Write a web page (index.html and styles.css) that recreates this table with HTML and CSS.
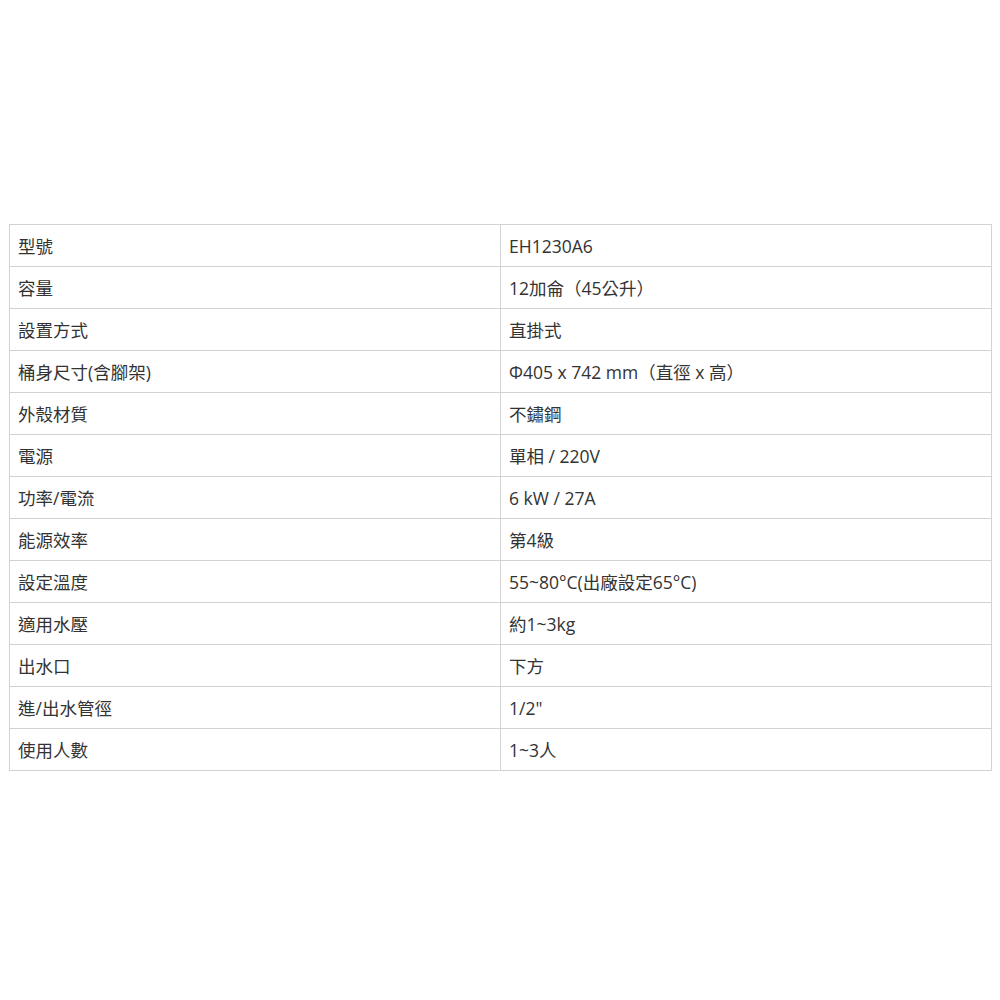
FILE: index.html
```html
<!DOCTYPE html>
<html lang="zh-Hant">
<head>
<meta charset="utf-8">
<link rel="stylesheet" href="styles.css">
</head>
<body>
<table class="spec">
<tbody>
<tr><td>型號</td><td>EH1230A6</td></tr>
<tr><td>容量</td><td>12加侖（45公升）</td></tr>
<tr><td>設置方式</td><td>直掛式</td></tr>
<tr><td>桶身尺寸(含腳架)</td><td>Φ405 x 742 mm（直徑 x 高）</td></tr>
<tr><td>外殼材質</td><td>不鏽鋼</td></tr>
<tr><td>電源</td><td>單相 / 220V</td></tr>
<tr><td>功率/電流</td><td>6 kW / 27A</td></tr>
<tr><td>能源效率</td><td>第4級</td></tr>
<tr><td>設定溫度</td><td>55~80°C(出廠設定65°C)</td></tr>
<tr><td>適用水壓</td><td>約1~3kg</td></tr>
<tr><td>出水口</td><td>下方</td></tr>
<tr><td>進/出水管徑</td><td>1/2"</td></tr>
<tr><td>使用人數</td><td>1~3人</td></tr>
</tbody>
</table>
</body>
</html>
```
FILE: styles.css
```css
html, body {
  margin: 0;
  background: #ffffff;
}
body {
  padding: 224px 8px 0 9px;
  font-family: "Open Sans", "Noto Sans CJK TC", sans-serif;
  font-size: 17.5px;
  color: #333333;
}
.spec {
  width: 983px;
  border-collapse: collapse;
  table-layout: fixed;
}
.spec td {
  width: 50%;
  height: 42px;
  padding: 0 8px;
  border: 1px solid #d2d2d2;
  vertical-align: middle;
  box-sizing: border-box;
  line-height: 20px;
}
```
